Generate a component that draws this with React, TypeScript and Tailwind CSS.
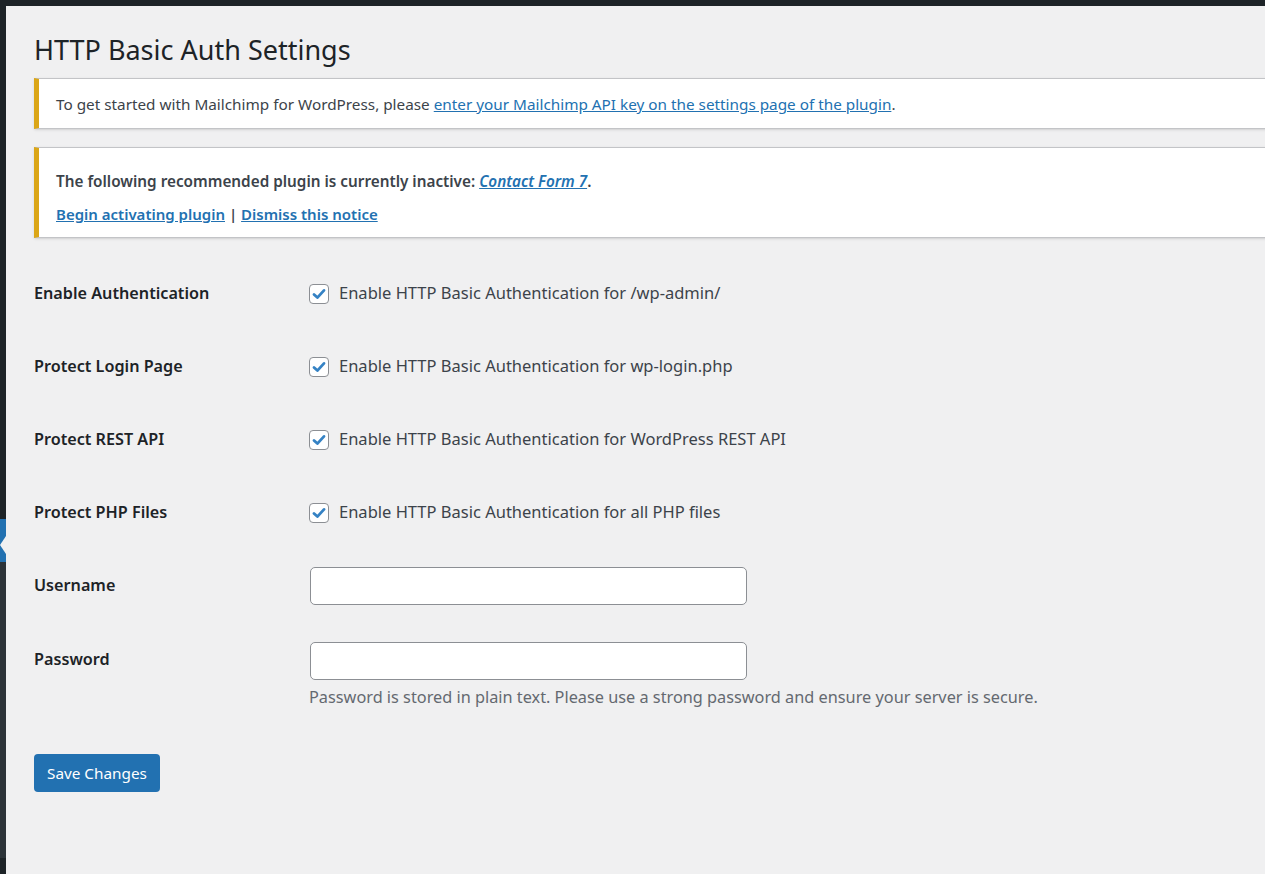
import { useState } from "react";

const font = { fontFamily: '"Noto Sans", "Liberation Sans", sans-serif' };

const checkRows = [
  { label: "Enable Authentication", text: "Enable HTTP Basic Authentication for /wp-admin/" },
  { label: "Protect Login Page", text: "Enable HTTP Basic Authentication for wp-login.php" },
  { label: "Protect REST API", text: "Enable HTTP Basic Authentication for WordPress REST API" },
  { label: "Protect PHP Files", text: "Enable HTTP Basic Authentication for all PHP files" },
];

const CheckBox = ({ checked, onClick }: { checked: boolean; onClick: () => void }) => (
  <span
    onClick={onClick}
    className="w-[20px] h-[20px] rounded-[4px] border border-[#8c8f94] bg-white flex items-center justify-center shrink-0 cursor-pointer"
  >
    {checked && (
      <svg width="16" height="16" viewBox="0 0 16 16">
        <path d="M3 8.4 L6.4 11.6 L13 4.4" fill="none" stroke="#3582c4" strokeWidth="2.8" strokeLinecap="round" strokeLinejoin="round" />
      </svg>
    )}
  </span>
);

const App = () => {
  const [checks, setChecks] = useState([true, true, true, true]);
  const [username, setUsername] = useState("");
  const [password, setPassword] = useState("");

  const toggle = (index: number) => {
    setChecks((prev) => prev.map((c, i) => (i === index ? !c : c)));
  };

  return (
    <div style={font} className="h-screen w-full flex flex-col overflow-hidden bg-[#f0f0f1]">
      <div className="h-[6px] bg-[#1d2327] shrink-0" />
      <div className="flex flex-1 min-h-0">
        {/* admin menu edge */}
        <div className="w-[6px] flex flex-col shrink-0">
          <div className="h-[513px] bg-[#1d2327]" />
          <div className="h-[43px] bg-[#2271b1] relative">
            <div className="absolute left-0 top-[17px] w-0 h-0 border-y-[9px] border-y-transparent border-r-[6px] border-r-[#f0f0f1]" />
          </div>
          <div className="h-[296px] bg-[#2c3338]" />
          <div className="flex-1 bg-[#1d2327]" />
        </div>

        <div className="flex-1 min-w-0 pl-[28px] pt-[25px]">
          <h1 className="text-[27px] leading-[38px] text-[#1d2327] font-normal">HTTP Basic Auth Settings</h1>

          <div className="mt-[9px] -mr-[20px] bg-white border border-[#c3c4c7] border-l-[5px] border-l-[#dba617] shadow-sm pl-[17px] pt-[13px] pb-[11px]">
            <p className="text-[15.3px] leading-[25px] text-[#3c434a]">
              To get started with Mailchimp for WordPress, please{" "}
              <a href="#" className="text-[#2271b1] underline">
                enter your Mailchimp API key on the settings page of the plugin
              </a>
              .
            </p>
          </div>

          <div className="mt-[18px] -mr-[20px] bg-white border border-[#c3c4c7] border-l-[5px] border-l-[#dba617] shadow-sm pl-[17px] pt-[21px] pb-[10px]">
            <p className="text-[15.3px] leading-[25px] text-[#3c434a] font-semibold">
              The following recommended plugin is currently inactive:{" "}
              <a href="#" className="text-[#2271b1] underline italic">
                Contact Form 7
              </a>
              .
            </p>
            <p className="mt-[8px] text-[15px] leading-[25px] text-[#3c434a] font-semibold">
              <a href="#" className="text-[#2271b1] underline">
                Begin activating plugin
              </a>{" "}
              |{" "}
              <a href="#" className="text-[#2271b1] underline">
                Dismiss this notice
              </a>
            </p>
          </div>

          <form className="mt-[19px]" onSubmit={(e) => e.preventDefault()}>
            {checkRows.map((row, index) => (
              <div key={row.label} className="h-[73px] flex items-center">
                <div className="w-[275px] shrink-0 text-[16.2px] font-semibold text-[#1d2327]">{row.label}</div>
                <label className="flex items-center gap-[10px] text-[16.5px] text-[#3c434a]">
                  <CheckBox checked={checks[index]} onClick={() => toggle(index)} />
                  <span>{row.text}</span>
                </label>
              </div>
            ))}

            <div className="h-[73px] flex items-center">
              <div className="w-[276px] shrink-0 text-[16.2px] font-semibold text-[#1d2327]">Username</div>
              <input
                type="text"
                value={username}
                onChange={(e) => setUsername(e.target.value)}
                className="w-[437px] h-[38px] bg-white border border-[#8c8f94] rounded-[5px] px-[10px] text-[16.5px] text-[#2c3338] outline-none"
              />
            </div>

            <div className="flex pt-[20px]">
              <div className="w-[276px] shrink-0 pt-[4px] text-[16.2px] leading-[26px] font-semibold text-[#1d2327]">
                Password
              </div>
              <div className="flex flex-col">
                <input
                  type="password"
                  value={password}
                  onChange={(e) => setPassword(e.target.value)}
                  className="w-[437px] h-[38px] bg-white border border-[#8c8f94] rounded-[5px] px-[10px] text-[16.5px] text-[#2c3338] outline-none"
                />
                <p className="mt-[4px] -ml-[1px] text-[16.3px] leading-[26px] text-[#646970]">
                  Password is stored in plain text. Please use a strong password and ensure your server is secure.
                </p>
              </div>
            </div>

            <button
              type="submit"
              className="mt-[44px] h-[38px] px-[13px] bg-[#2271b1] text-white text-[15.3px] rounded-[4px]"
            >
              Save Changes
            </button>
          </form>
        </div>
      </div>
    </div>
  );
};

export default App;
